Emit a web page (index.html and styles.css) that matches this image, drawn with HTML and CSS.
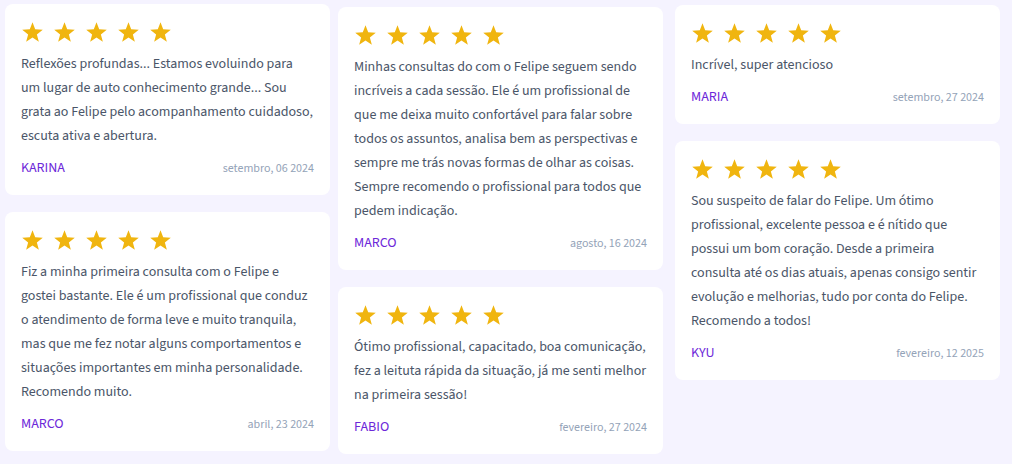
FILE: index.html
```html
<!DOCTYPE html>
<html lang="pt-BR">
<head>
<meta charset="utf-8">
<title>Depoimentos</title>
<link rel="stylesheet" href="styles.css">
</head>
<body>
<svg width="0" height="0" class="defs" aria-hidden="true">
  <defs>
    <symbol id="star" viewBox="0 0 21 20">
      <polygon points="10.5,0.2 13.2,7.28 20.77,7.66 14.87,12.42 16.85,19.74 10.5,15.6 4.15,19.74 6.13,12.42 0.23,7.66 7.8,7.28"/>
    </symbol>
  </defs>
</svg>
<main class="wall">
  <div class="col col-1">
    <article class="card">
      <div class="stars"><svg class="star"><use href="#star"/></svg><svg class="star"><use href="#star"/></svg><svg class="star"><use href="#star"/></svg><svg class="star"><use href="#star"/></svg><svg class="star"><use href="#star"/></svg></div>
      <p class="text">Reflexões profundas... Estamos evoluindo para um lugar de auto conhecimento grande... Sou grata ao Felipe pelo acompanhamento cuidadoso, escuta ativa e abertura.</p>
      <footer class="meta"><span class="name">KARINA</span><span class="date">setembro, 06 2024</span></footer>
    </article>
    <article class="card">
      <div class="stars"><svg class="star"><use href="#star"/></svg><svg class="star"><use href="#star"/></svg><svg class="star"><use href="#star"/></svg><svg class="star"><use href="#star"/></svg><svg class="star"><use href="#star"/></svg></div>
      <p class="text">Fiz a minha primeira consulta com o Felipe e gostei bastante. Ele é um profissional que conduz o atendimento de forma leve e muito tranquila, mas que me fez notar alguns comportamentos e situações importantes em minha personalidade. Recomendo muito.</p>
      <footer class="meta"><span class="name">MARCO</span><span class="date">abril, 23 2024</span></footer>
    </article>
  </div>
  <div class="col col-2">
    <article class="card">
      <div class="stars"><svg class="star"><use href="#star"/></svg><svg class="star"><use href="#star"/></svg><svg class="star"><use href="#star"/></svg><svg class="star"><use href="#star"/></svg><svg class="star"><use href="#star"/></svg></div>
      <p class="text">Minhas consultas do com o Felipe seguem sendo incríveis a cada sessão. Ele é um profissional de que me deixa muito confortável para falar sobre todos os assuntos, analisa bem as perspectivas e sempre me trás novas formas de olhar as coisas. Sempre recomendo o profissional para todos que pedem indicação.</p>
      <footer class="meta"><span class="name">MARCO</span><span class="date">agosto, 16 2024</span></footer>
    </article>
    <article class="card">
      <div class="stars"><svg class="star"><use href="#star"/></svg><svg class="star"><use href="#star"/></svg><svg class="star"><use href="#star"/></svg><svg class="star"><use href="#star"/></svg><svg class="star"><use href="#star"/></svg></div>
      <p class="text">Ótimo profissional, capacitado, boa comunicação, fez a leituta rápida da situação, já me senti melhor na primeira sessão!</p>
      <footer class="meta"><span class="name">FABIO</span><span class="date">fevereiro, 27 2024</span></footer>
    </article>
  </div>
  <div class="col col-3">
    <article class="card">
      <div class="stars"><svg class="star"><use href="#star"/></svg><svg class="star"><use href="#star"/></svg><svg class="star"><use href="#star"/></svg><svg class="star"><use href="#star"/></svg><svg class="star"><use href="#star"/></svg></div>
      <p class="text">Incrível, super atencioso</p>
      <footer class="meta"><span class="name">MARIA</span><span class="date">setembro, 27 2024</span></footer>
    </article>
    <article class="card">
      <div class="stars"><svg class="star"><use href="#star"/></svg><svg class="star"><use href="#star"/></svg><svg class="star"><use href="#star"/></svg><svg class="star"><use href="#star"/></svg><svg class="star"><use href="#star"/></svg></div>
      <p class="text">Sou suspeito de falar do Felipe. Um ótimo profissional, excelente pessoa e é nítido que possui um bom coração. Desde a primeira consulta até os dias atuais, apenas consigo sentir evolução e melhorias, tudo por conta do Felipe. Recomendo a todos!</p>
      <footer class="meta"><span class="name">KYU</span><span class="date">fevereiro, 12 2025</span></footer>
    </article>
  </div>
</main>
</body>
</html>
```
FILE: styles.css
```css
* { box-sizing: border-box; }

html, body {
  margin: 0;
  padding: 0;
  background: #f5f3ff;
}

body {
  font-family: "Source Sans 3", "Source Sans Pro", Lato, sans-serif;
  font-size: 14px;
  color: #4a5568;
  width: 1012px;
  height: 464px;
  overflow: hidden;
}

.defs {
  position: absolute;
  width: 0;
  height: 0;
}

.wall {
  display: flex;
  align-items: flex-start;
  gap: 8px;
  padding: 4px 0 0 5px;
}

.col {
  width: 325px;
  flex: 0 0 325px;
  display: flex;
  flex-direction: column;
  gap: 17px;
}

.col-2 { margin-top: 3px; }
.col-3 { margin-top: 1px; margin-left: 4px; }

.card {
  background: #ffffff;
  border-radius: 8px;
  padding: 16px 16px 15px;
}

.stars {
  display: flex;
  align-items: center;
  gap: 11px;
  height: 24px;
  padding-left: 1px;
}

.star {
  width: 21px;
  height: 20px;
  fill: #f0b50f;
  display: block;
}

.text {
  margin: 8px 0 0;
  font-size: 14px;
  line-height: 24px;
  color: #4a5568;
}

.meta {
  display: flex;
  justify-content: space-between;
  align-items: center;
  height: 24px;
  margin-top: 8px;
}

.name {
  font-size: 14px;
  color: #6d28d9;
}

.date {
  font-size: 12px;
  color: #94a3b8;
}
```
